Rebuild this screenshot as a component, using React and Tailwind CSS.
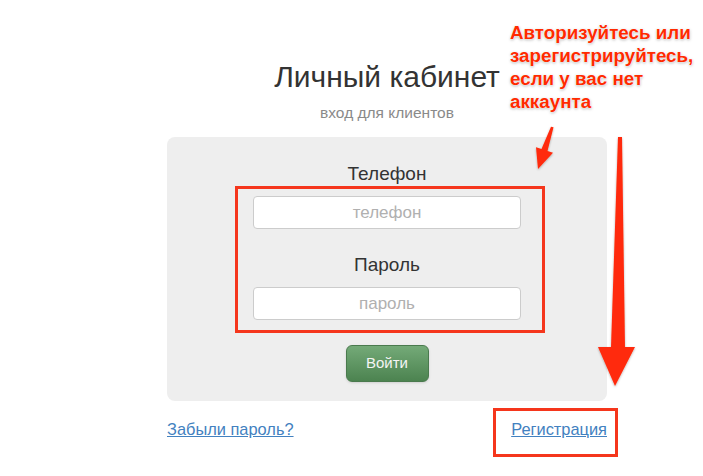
export default function App() {
  const inputClass =
    "block w-[268px] h-[33px] rounded-[4px] border border-[#cccccc] bg-white text-center text-[17px] text-[#555] placeholder:text-[#b0b0b0] outline-none";

  return (
    <div className="relative w-[703px] h-[476px] overflow-hidden bg-white font-['Liberation_Sans',Arial,sans-serif]">
      <div className="ml-[167px] w-[440px] pt-[60px] flex flex-col">
        <h1 className="text-center text-[30px] leading-[34px] text-[#333]">Личный кабинет</h1>
        <p className="mt-[9px] text-center text-[15.5px] leading-[20px] text-[#8a8a8a]">вход для клиентов</p>

        <div className="mt-[14px] h-[264px] rounded-lg bg-[#eeeeee] pt-[25px] flex flex-col items-center">
          <label className="text-[19px] leading-[24px] text-[#333]">Телефон</label>
          <div className="ml-[6px] w-[310px] border-[3px] border-[#f5361c] pt-[7px] pb-[10px] pl-[15px] pr-[21px]">
            <input className={inputClass} placeholder="телефон" />
            <label className="mt-[24px] block text-center text-[19px] leading-[24px] text-[#333]">Пароль</label>
            <input className={`${inputClass} mt-[10px]`} type="password" placeholder="пароль" />
          </div>
          <button className="mt-[12px] w-[83px] h-[37px] rounded-md border border-[#4a7a4e] bg-gradient-to-b from-[#74aa78] to-[#4c8350] text-[15px] text-[#f4f4f4] shadow-sm">
            Войти
          </button>
        </div>

        <div className="mt-[18px] flex justify-between text-[16.4px] leading-[20px] text-[#4281c0]">
          <a href="#" className="underline">Забыли пароль?</a>
          <a href="#" className="underline">Регистрация</a>
        </div>
      </div>

      {/* annotation overlay */}
      <div className="absolute left-[493px] top-[408px] w-[125px] h-[49px] border-[3px] border-[#f5361c] pointer-events-none" />

      <div className="absolute left-[510px] top-[21px] text-[18.8px] leading-[23px] font-bold text-[#ff2a00] [text-shadow:0_0_2px_#fff,0_0_1px_#fff,0_1px_3px_rgba(0,0,0,0.35)] whitespace-nowrap">
        <div>Авторизуйтесь или</div>
        <div>зарегистрируйтесь,</div>
        <div>если у вас нет</div>
        <div>аккаунта</div>
      </div>

      <svg className="absolute inset-0 pointer-events-none" width="703" height="476" viewBox="0 0 703 476">
        <defs>
          <filter id="sh" x="-20%" y="-20%" width="140%" height="140%">
            <feDropShadow dx="0" dy="1" stdDeviation="1.2" floodColor="#000" floodOpacity="0.3" />
          </filter>
        </defs>
        <polygon
          points="551,126.7 553.5,127.3 547.5,151 553,152.8 538,169 536,147.2 541.5,149"
          fill="#ff2a0a"
          filter="url(#sh)"
        />
        <polygon
          points="618,137 622,137 625,347 635,347 615,386 598,347 611,347"
          fill="#ff2a0a"
          filter="url(#sh)"
        />
      </svg>
    </div>
  );
}
